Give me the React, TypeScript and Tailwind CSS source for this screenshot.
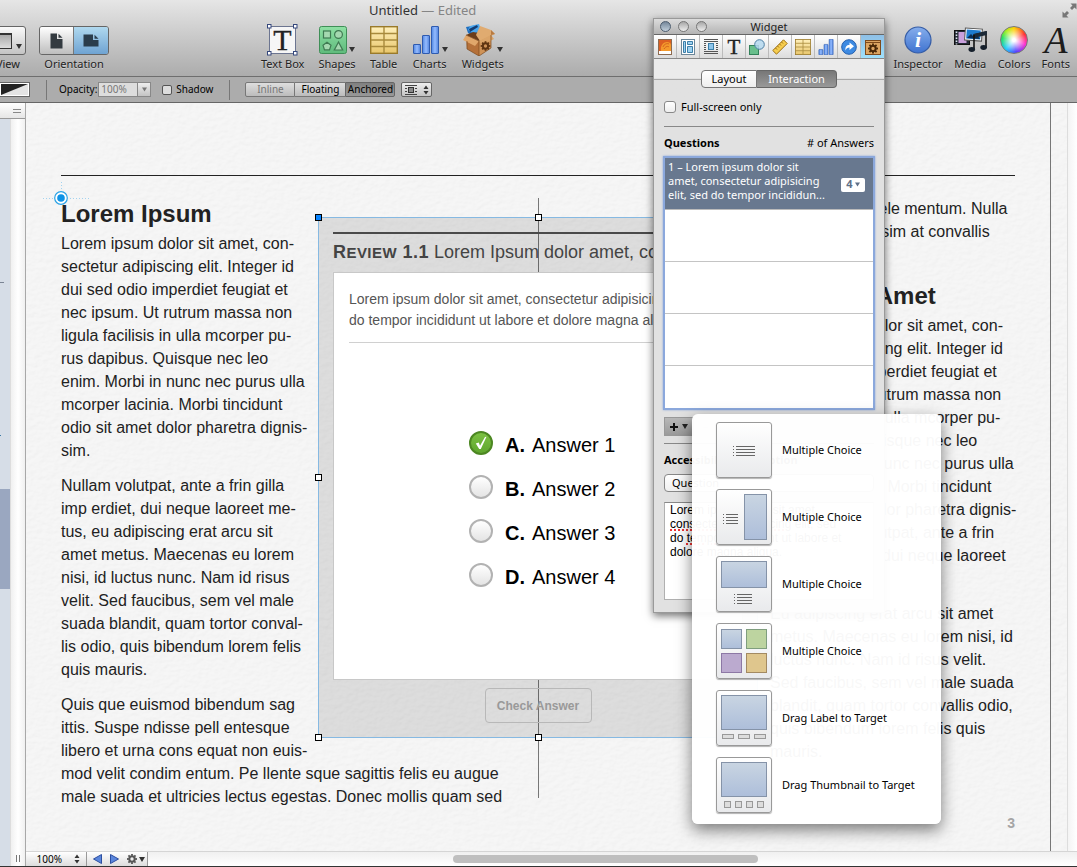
import React, { useState } from "react";
import clsx from "clsx";

const UI_FONT = "font-['Noto_Sans','Open_Sans',sans-serif]";
const PAGE_FONT = "font-['Liberation_Sans',Arial,sans-serif]";

const INTRO = [
  "Lorem ipsum dolor sit amet, con-",
  "sectetur adipiscing elit. Integer id",
  "dui sed odio imperdiet feugiat et",
  "nec ipsum. Ut rutrum massa non",
  "ligula facilisis in ulla mcorper pu-",
  "rus dapibus. Quisque nec leo",
  "enim. Morbi in nunc nec purus ulla",
  "mcorper lacinia. Morbi tincidunt",
  "odio sit amet dolor pharetra dignis-",
];

const LEFT_PARAGRAPHS = [
  [...INTRO, "sim."],
  [
    "Nullam volutpat, ante a frin gilla",
    "imp erdiet, dui neque laoreet me-",
    "tus, eu adipiscing erat arcu sit",
    "amet metus. Maecenas eu lorem",
    "nisi, id luctus nunc. Nam id risus",
    "velit. Sed faucibus, sem vel male",
    "suada blandit, quam tortor conval-",
    "lis odio, quis bibendum lorem felis",
    "quis mauris.",
  ],
  [
    "Quis que euismod bibendum sag",
    "ittis. Suspe ndisse pell entesque",
    "libero et urna cons equat non euis-",
    "mod velit condim entum. Pe llente sque sagittis felis eu augue",
    "male suada et ultricies lectus egestas. Donec mollis quam sed",
  ],
];

const RIGHT_TOP = [
  "Curabitur vitae ele mentum. Nulla",
  "Mauris id dignissim at convallis",
];

const RIGHT_PARAGRAPHS = [
  [
    ...INTRO,
    "sim. Nullam volutpat, ante a frin",
    "gilla imp erdiet, dui neque laoreet",
    "metus.",
  ],
  [
    "Eu adipiscing erat arcu sit amet",
    "metus. Maecenas eu lorem nisi, id",
    "luctus nunc. Nam id risus velit.",
    "Sed faucibus, sem vel male suada",
    "blandit, quam tortor convallis odio,",
    "quis bibendum lorem felis quis",
    "mauris.",
  ],
];

const Paragraph = ({ lines }: { lines: string[] }) => (
  <p className="mb-3 text-base leading-[23px] whitespace-nowrap">
    {lines.map((line) => (
      <span key={line} className="block">
        {line}
      </span>
    ))}
  </p>
);

const Caret = ({ className }: { className?: string }) => (
  <svg viewBox="0 0 6 5" className={clsx("w-1.5 h-[5px]", className)}>
    <path d="M0 0h6L3 5z" fill="currentColor" />
  </svg>
);

const Stepper = () => (
  <svg viewBox="0 0 6 10" className="w-1.5 h-2.5">
    <path d="M0.5 4L3 0.5 5.5 4zM0.5 6L3 9.5 5.5 6z" fill="#333" />
  </svg>
);

/* ---------- toolbar icons ---------- */

const TextBoxIcon = () => (
  <svg viewBox="0 0 31 32" className="w-[31px] h-8">
    <rect x="2.5" y="2.5" width="26" height="27" fill="#f6f6f6" stroke="#6c7590" />
    <text x="15.5" y="26" textAnchor="middle" fontSize="30" fontFamily="Liberation Serif, serif" fill="#222" stroke="#222" strokeWidth="0.3">
      T
    </text>
    {[[1, 1], [27, 1], [1, 28], [27, 28]].map(([x, y]) => (
      <rect key={`${x}-${y}`} x={x - 0.5} y={y - 0.5} width="3.5" height="3.5" fill="#fff" stroke="#34477c" />
    ))}
  </svg>
);

const ShapesIcon = () => (
  <svg viewBox="0 0 28 29" className="w-7 h-[29px]">
    <defs>
      <linearGradient id="shapesFill" x1="0" y1="0" x2="0" y2="1">
        <stop offset="0" stopColor="#8fe0a4" />
        <stop offset="1" stopColor="#5fbb7c" />
      </linearGradient>
    </defs>
    <rect x="0.5" y="0.5" width="27" height="27" rx="2" fill="url(#shapesFill)" stroke="#3f8f57" />
    <g fill="#a5d8b0" stroke="#3f7a52" strokeWidth="1.2">
      <rect x="4.5" y="5" width="7" height="7" />
      <circle cx="19.5" cy="8.5" r="3.9" />
      <path d="M8 16.2l4 3-1.5 4.7h-5L4 19.2z" />
      <path d="M19.5 16l4.2 8h-8.4z" />
    </g>
  </svg>
);

const TableIcon = ({ className }: { className: string }) => (
  <svg viewBox="0 0 28 28" className={className}>
    <defs>
      <linearGradient id="tableFill" x1="0" y1="0" x2="0" y2="1">
        <stop offset="0" stopColor="#fff0bb" />
        <stop offset="1" stopColor="#e8c66c" />
      </linearGradient>
    </defs>
    <rect x="0.7" y="0.7" width="26.6" height="26.6" fill="url(#tableFill)" stroke="#9a7a2a" strokeWidth="1.4" />
    <path d="M14 1v26M1 7.5h26M1 14h26M1 20.5h26" stroke="#a88a3c" strokeWidth="1.4" />
  </svg>
);

const BarsIcon = ({ className }: { className: string }) => (
  <svg viewBox="0 0 28 28" className={className}>
    <defs>
      <linearGradient id="barsFill" x1="0" y1="0" x2="1" y2="0">
        <stop offset="0" stopColor="#4f86e0" />
        <stop offset="0.5" stopColor="#94bbff" />
        <stop offset="1" stopColor="#4f82db" />
      </linearGradient>
    </defs>
    <g fill="url(#barsFill)" stroke="#2f5bb0">
      <rect x="1.5" y="18.5" width="7" height="9" rx="0.5" />
      <rect x="10.5" y="9.5" width="7" height="18" rx="0.5" />
      <rect x="19.5" y="0.5" width="7" height="27" rx="0.5" />
    </g>
  </svg>
);

const GEAR_TEETH = [0, 45, 90, 135, 180, 225, 270, 315];

const Gear = ({ cx, cy, r, color }: { cx: number; cy: number; r: number; color: string }) => (
  <g transform={`translate(${cx} ${cy})`}>
    <circle r={r * 0.55} fill="none" stroke={color} strokeWidth={r * 0.42} />
    {GEAR_TEETH.map((a) => (
      <rect key={a} x={-r * 0.18} y={-r} width={r * 0.36} height={r * 0.35} fill={color} transform={`rotate(${a})`} />
    ))}
  </g>
);

const WidgetsIcon = () => (
  <svg viewBox="0 0 32 32" className="w-8 h-8">
    <path d="M5 9L3 3l12-2 3 6-8 5z" fill="#1f6fc0" />
    <path d="M5 6l2-4 9-2 2 6-7 4z" fill="#49a6ee" />
    <path d="M6 5l8-4 1 2-8 5z" fill="#123c74" />
    <path d="M3 11l13 6v15L4 25z" fill="#b5713a" />
    <path d="M16 17l12-6v13l-12 8z" fill="#cf9358" />
    <path d="M3 11l7-3 18 3-12 6z" fill="#6b3d1a" />
    <path d="M3 11l13 6-4 5L0 16z" fill="#e0a76b" />
    <path d="M13 11l4-9 11 4 4 4-15 7z" fill="#e0ab70" />
    <path d="M28 6l4 4-4 1z" fill="#b87b42" />
    <path d="M16 17l12-6 3 4-12 6z" fill="#dba468" />
    <path d="M3 11l13 6v15M28 11v13l-12 8L4 25V17" fill="none" stroke="#7d4a20" strokeWidth="0.7" />
    <Gear cx={22.5} cy={22} r={4.8} color="#5f3512" />
  </svg>
);

const InspectorIcon = () => (
  <svg viewBox="0 0 30 30" className="w-[30px] h-[30px]">
    <defs>
      <linearGradient id="infoFill" x1="0" y1="0" x2="0" y2="1">
        <stop offset="0" stopColor="#86aeec" />
        <stop offset="1" stopColor="#3f73d0" />
      </linearGradient>
    </defs>
    <circle cx="15" cy="15" r="13" fill="url(#infoFill)" stroke="#355ca5" strokeWidth="1.2" />
    <text x="15" y="22" textAnchor="middle" fontSize="22" fontWeight="bold" fontStyle="italic" fontFamily="Liberation Serif, serif" fill="#fff">
      i
    </text>
  </svg>
);

const MediaIcon = () => (
  <svg viewBox="0 0 33 28" className="w-[33px] h-7">
    <rect x="0.5" y="4.5" width="15" height="14" fill="#222a36" stroke="#111" />
    <rect x="4.5" y="6" width="8" height="11" fill="#c9a0dc" />
    <path d="M2.5 5.5v13" stroke="#dfe5ee" strokeWidth="1.6" strokeDasharray="1.6 1.4" />
    <rect x="11" y="2.5" width="17" height="12" fill="#fff" stroke="#555" transform="rotate(4 19 8)" />
    <rect x="12.5" y="4" width="14" height="9" fill="#1d7cd0" transform="rotate(4 19 8)" />
    <path d="M13 12l4-4 3 3 3-2 3 4z" fill="#0c2e52" />
    <path d="M20 9l12-3v16" fill="none" stroke="#111" strokeWidth="1.6" />
    <path d="M19.200 8l13.600-3v4l-13.600 3z" fill="#1c2a38" />
    <path d="M20 9v14" stroke="#111" strokeWidth="1.6" />
    <ellipse cx="17.8" cy="23.5" rx="3.3" ry="2.4" fill="#16202c" />
    <ellipse cx="29.6" cy="21.5" rx="3.3" ry="2.4" fill="#16202c" />
  </svg>
);

const ColorsIcon = () => (
  <span className="h-7 w-7 rounded-full border border-[#777] bg-[radial-gradient(circle,white_8%,transparent_65%),conic-gradient(#ffd000,#ff3030_60deg,#ff30d0_110deg,#5040ff_170deg,#20c8ff_220deg,#20e060_280deg,#a8f020_320deg,#ffd000)]" />
);

const FontsIcon = () => (
  <span className="font-['Liberation_Serif',serif] text-[38px] leading-7 text-[#1c1c1c] italic">A</span>
);

const ToolItem = ({
  label,
  menu,
  children,
}: {
  label: string;
  menu?: boolean;
  children: React.ReactNode;
}) => (
  <button type="button" className="flex flex-col items-center">
    <span className={clsx("relative flex h-8 items-center", menu && "mr-2")}>
      {children}
      {menu && <Caret className="absolute -right-2 bottom-1 text-[#333]" />}
    </span>
    <span className="text-[11px] leading-4 text-[#222] [text-shadow:0_1px_0_rgba(255,255,255,0.4)]">
      {label}
    </span>
  </button>
);

const Toolbar = () => (
  <header className="flex h-[77px] flex-col border-b border-[#6e6e6e] bg-gradient-to-b from-[#e6e6e6] to-[#acacac]">
    <div className="flex h-5 items-center justify-between pl-[369px]">
      <h1 className="text-[13px] leading-5 text-[#333]">
        Untitled <span className="text-[#858585]">— Edited</span>
      </h1>
      <button type="button" aria-label="Full screen">
        <svg viewBox="0 0 15 15" className="h-[15px] w-[15px] text-[#777]">
          <path d="M14.5 0.5v6l-2-2-2.5 2.5-2-2L10.5 2.500l-2-2zM0.5 14.5v-6l2 2L5 8l2 2-2.5 2.5 2 2z" fill="currentColor" />
        </svg>
      </button>
    </div>
    <div className="flex items-start pt-1">
      <button type="button" className="flex w-[26px] shrink-0 flex-col items-end overflow-hidden">
        <span className="mt-0.5 mb-px flex h-[29px] w-12 items-center justify-end gap-1 rounded-[3px] border border-[#666] bg-gradient-to-b from-[#fafafa] to-[#c4c4c4] pr-[3px]">
          <span className="h-4 w-8 border border-t-2 border-[#333] bg-gradient-to-b from-[#aaa] to-[#ddd]" />
          <Caret className="mt-3 shrink-0 text-[#333]" />
        </span>
        <span className="mr-1.5 text-[11px] leading-4 text-[#222]">View</span>
      </button>
      <div className="ml-[13px] flex flex-col items-center">
        <div className="mt-0.5 mb-px flex h-[29px] overflow-hidden rounded-[3px] border border-[#666]">
          <button type="button" aria-label="Portrait" className="flex w-[34px] items-center justify-center border-r border-[#777] bg-gradient-to-b from-white to-[#bebebe]">
            <svg viewBox="0 0 13 16" className="h-4 w-[13px]">
              <path d="M0.5 0.5H7V6h5.5v9.5h-12z" fill="#333a40" />
              <path d="M8.5 0.8v4h4z" fill="#333a40" />
            </svg>
          </button>
          <button type="button" aria-label="Landscape" className="flex w-[34px] items-center justify-center bg-gradient-to-b from-[#b0d9ef] to-[#6fa3d2]">
            <svg viewBox="0 0 16 13" className="h-[13px] w-4">
              <path d="M0.5 0.5H10V6h5.5v6.5h-15z" fill="#2b3d4c" />
              <path d="M11.5 0.8v4h4z" fill="#2b3d4c" />
            </svg>
          </button>
        </div>
        <span className="text-[11px] leading-4 text-[#222] [text-shadow:0_1px_0_rgba(255,255,255,0.4)]">
          Orientation
        </span>
      </div>
      <div className="ml-[152px] flex gap-3.5">
        <ToolItem label="Text Box"><TextBoxIcon /></ToolItem>
        <ToolItem label="Shapes" menu><ShapesIcon /></ToolItem>
        <ToolItem label="Table"><TableIcon className="h-7 w-7" /></ToolItem>
        <ToolItem label="Charts" menu><BarsIcon className="h-7 w-7" /></ToolItem>
        <ToolItem label="Widgets" menu><WidgetsIcon /></ToolItem>
      </div>
      <div className="mr-[7px] ml-auto flex gap-[11px]">
        <ToolItem label="Inspector"><InspectorIcon /></ToolItem>
        <ToolItem label="Media"><MediaIcon /></ToolItem>
        <ToolItem label="Colors"><ColorsIcon /></ToolItem>
        <ToolItem label="Fonts"><FontsIcon /></ToolItem>
      </div>
    </div>
  </header>
);

const FormatBar = () => (
  <div className="flex h-[26px] items-center border-b border-[#666] bg-[#acacac] text-[10px] text-black">
    <button type="button" aria-label="Fill" className="h-[15px] w-[30px] border border-l-0 border-[#666] bg-white p-px">
      <svg viewBox="0 0 28 11" preserveAspectRatio="none" className="h-full w-full">
        <rect width="28" height="11" fill="#e4e4e4" />
        <path d="M0 0h28L0 11z" fill="#222" />
      </svg>
    </button>
    <span className="ml-4 h-5 w-px bg-[#777]" />
    <label htmlFor="opacity" className="ml-3">Opacity:</label>
    <input id="opacity" defaultValue="100%" className="ml-px h-[15px] w-10 border border-[#888] bg-[#ddd] px-0.5 text-[10px] text-[#777]" />
    <button type="button" aria-label="Opacity values" className="flex h-[15px] w-[13px] items-center justify-center border border-l-0 border-[#888] bg-gradient-to-b from-[#eee] to-[#c4c4c4] text-[#777]">
      <Caret className="h-1 w-[5px]" />
    </button>
    <label className="ml-[11px] flex items-center gap-1">
      <input type="checkbox" className="h-2.5 w-2.5 appearance-none rounded-[2px] border border-[#555] bg-[#ddd]" />
      Shadow
    </label>
    <span className="ml-4 h-5 w-px bg-[#777]" />
    <div className="ml-[15px] flex h-[15px] leading-[13px]">
      <button type="button" className="w-[50px] rounded-l-xs border border-[#777] bg-gradient-to-b from-[#dedede] to-[#bcbcbc] text-[#777]">Inline</button>
      <button type="button" className="w-[50px] border-y border-[#777] bg-gradient-to-b from-[#dedede] to-[#bcbcbc]">Floating</button>
      <button type="button" className="w-[50px] rounded-r-xs border border-[#666] bg-gradient-to-b from-[#808080] to-[#989898]">Anchored</button>
    </div>
    <button type="button" aria-label="Text wrap" className="ml-1.5 flex h-[15px] w-[31px] items-center justify-center gap-1.5 rounded-xs border border-[#666] bg-gradient-to-b from-[#eee] to-[#c4c4c4]">
      <svg viewBox="0 0 12 10" className="h-2.5 w-3">
        <path d="M0 0.5h12M0 9.5h12M0 3.5h2M0 6.5h2M10 3.5h2M10 6.5h2" stroke="#444" />
        <rect x="3.5" y="2.5" width="5" height="5" fill="#888" stroke="#333" />
      </svg>
      <Stepper />
    </button>
  </div>
);

/* ---------- page ---------- */

const PaperTexture = () => (
  <svg className="pointer-events-none absolute inset-0 h-full w-full" aria-hidden="true">
    <filter id="paper" x="0" y="0" width="100%" height="100%" colorInterpolationFilters="sRGB">
      <feTurbulence type="fractalNoise" baseFrequency="0.16 0.24" numOctaves="3" seed="4" />
      <feDiffuseLighting surfaceScale="0.5" diffuseConstant="1.11" lightingColor="#ffffff">
        <feDistantLight azimuth="235" elevation="60" />
      </feDiffuseLighting>
    </filter>
    <rect width="100%" height="100%" fill="#f5f5f5" />
    <rect width="100%" height="100%" filter="url(#paper)" opacity="0.13" />
  </svg>
);

const Handle = ({ className, active }: { className: string; active?: boolean }) => (
  <span
    className={clsx(
      "absolute h-[7px] w-[7px] border border-black",
      active ? "bg-[#0a84ff]" : "bg-white",
      className,
    )}
  />
);

const ANSWERS = ["Answer 1", "Answer 2", "Answer 3", "Answer 4"];

const ReviewWidget = () => {
  const [picked, setPicked] = useState(0);

  return (
    <section className="absolute top-[114px] left-[292px] h-[521px] w-[440px] border border-[#86b9e2] bg-black/10 px-3.5 pt-3.5 text-[#444]">
      <h3 className="border-t-2 border-[#4a4a4a] pt-[7px] text-lg leading-[23px] whitespace-nowrap">
        <b className="tracking-wide">
          R<span className="text-[15px]">EVIEW</span> 1.1
        </b>{" "}
        Lorem Ipsum dolor amet, consectetur
      </h3>
      <div className="mt-2 h-[408px] border border-[#c8c8c8] bg-white px-[15px] pt-4">
        <p className="border-b border-[#d0d0d0] pb-[11px] text-sm leading-[21px] whitespace-nowrap text-[#555]">
          Lorem ipsum dolor sit amet, consectetur adipisicing elit,
          <br />
          do tempor incididunt ut labore et dolore magna aliqua.
        </p>
        <ul className="mt-[78px] ml-[120px] flex flex-col text-xl text-black">
          {ANSWERS.map((answer, i) => (
            <li key={answer} className="h-11">
              <label className="flex h-11 items-center">
                <span className="relative flex h-6 w-6 items-center justify-center">
                  <input
                    type="radio"
                    name="answer"
                    checked={picked === i}
                    onChange={() => setPicked(i)}
                    className={clsx(
                      "h-6 w-6 appearance-none rounded-full border-2",
                      picked === i
                        ? "border-[#4c8722] bg-gradient-to-b from-[#7cc142] to-[#5fa62e]"
                        : "border-[#b2b2b2] bg-gradient-to-b from-white to-[#e4e4e4]",
                    )}
                  />
                  {picked === i && (
                    <svg viewBox="0 0 12 14" className="pointer-events-none absolute h-3.5 w-3">
                      <path d="M0.8 7.5l3-1 1.2 3.2L10 1l1.5-0.3L5.8 13H4.2z" fill="#fff" />
                    </svg>
                  )}
                </span>
                <b className="mt-1 ml-3 w-[27px]">{"ABCD"[i]}.</b>
                <span className="mt-1">{answer}</span>
              </label>
            </li>
          ))}
        </ul>
      </div>
      <div className="flex justify-center pt-2">
        <button type="button" className="h-[35px] w-[107px] rounded border border-[#b8b8b8] text-xs font-bold text-[#999]">
          Check Answer
        </button>
      </div>
      <Handle className="-top-1 -left-1" active />
      <Handle className="-top-1 left-[216px]" />
      <Handle className="top-[256px] -left-1" />
      <Handle className="-bottom-1 -left-1" />
      <Handle className="-bottom-1 left-[216px]" />
    </section>
  );
};

const AnchorMark = () => (
  <svg viewBox="0 0 50 32" className="absolute top-[78px] left-4 h-8 w-[50px]">
    <path d="M1 17.5h10M28 17.5h20M19.5 1v9" stroke="#a3d3f0" strokeDasharray="1 2" />
    <circle cx="19" cy="17" r="6.3" fill="#fff" stroke="#2ba3e6" strokeWidth="1.2" />
    <circle cx="19" cy="17" r="3.8" fill="#0f93e6" />
  </svg>
);

const Page = () => (
  <main className={clsx("relative flex-1 overflow-hidden text-[#222]", PAGE_FONT)}>
    <PaperTexture />
    <div className="relative mr-4 h-full border-r border-[#777] pr-[35px] pl-[35px]">
      <hr className="border-transparent pt-[71px]" />
      <hr className="border-t border-[#222]" />
      <div className="flex justify-between pt-[21px]">
        <article className="w-[246px] pt-0.5">
          <h2 className="mb-[3px] text-2xl leading-[30px] font-bold">Lorem Ipsum</h2>
          {LEFT_PARAGRAPHS.map((lines) => (
            <Paragraph key={lines[0]} lines={lines} />
          ))}
        </article>
        <article className="w-[245px]">
          <Paragraph lines={RIGHT_TOP} />
          <h2 className="mt-[38px] mb-[3px] text-2xl leading-[30px] font-bold">Dolor Sit Amet</h2>
          {RIGHT_PARAGRAPHS.map((lines) => (
            <Paragraph key={lines[0]} lines={lines} />
          ))}
        </article>
      </div>
      <span className="absolute right-[35px] bottom-[18px] text-sm font-bold text-[#a5a5a5]">3</span>
      <AnchorMark />
      <span className="absolute top-[95px] left-[512px] h-[600px] w-px bg-[#777]" />
      <ReviewWidget />
    </div>
  </main>
);

const Rail = () => (
  <aside className="flex w-[26px] shrink-0 flex-col border-r border-[#a8a8a8]">
    <div className="flex h-4 items-center justify-end border-b border-[#999] bg-gradient-to-b from-white to-[#e6e6e6] pr-1">
      <span className="h-1 w-2 border-y border-[#888]" />
    </div>
    <div className="flex flex-1">
      <div className="flex w-2.5 flex-col bg-[#d6dde7]">
        <span className="mt-[163px] h-px w-1 bg-[#7a8494]" />
        <span className="mt-[152px] h-px w-px bg-[#3b7aa5]" />
        <span className="mt-[53px] h-[100px] bg-[#9aa7c0]" />
      </div>
      <div className="flex flex-1 items-end justify-center border-l border-[#ddd] bg-gradient-to-r from-[#f0f0f0] via-white to-[#f0f0f0] pb-1">
        <span className="h-[7px] w-1 border-x border-[#777]" />
      </div>
    </div>
  </aside>
);

const StatusBar = () => (
  <footer className="flex h-[15px] border-t border-[#d5d5d5] bg-gradient-to-b from-[#f0f0f0] to-white text-[10px] leading-[14px] text-black">
    <button type="button" className="flex w-[61px] items-center justify-end gap-3 border-r border-[#999] bg-gradient-to-b from-white to-[#ddd] pr-1.5">
      100%
      <Stepper />
    </button>
    <div className="flex w-[61px] items-center gap-2 border-r border-[#999] bg-gradient-to-b from-white to-[#ddd] pl-1.5">
      <button type="button" aria-label="Previous page">
        <svg viewBox="0 0 9 10" className="h-2.5 w-[9px]"><path d="M8.5 0.5v9L0.5 5z" fill="#5a86dc" stroke="#2d4fa0" /></svg>
      </button>
      <button type="button" aria-label="Next page">
        <svg viewBox="0 0 9 10" className="h-2.5 w-[9px]"><path d="M0.5 0.5v9L8.5 5z" fill="#5a86dc" stroke="#2d4fa0" /></svg>
      </button>
      <button type="button" aria-label="Actions" className="flex items-center gap-0.5">
        <svg viewBox="0 0 10 10" className="h-2.5 w-2.5"><Gear cx={5} cy={5} r={5} color="#555" /></svg>
        <Caret className="h-[3px] w-1 text-[#333]" />
      </button>
    </div>
    <div className="flex flex-1 items-center pl-[29%]">
      <span className="h-2 w-[305px] rounded-full bg-[#bfbfbf]" />
    </div>
  </footer>
);

/* ---------- inspector ---------- */

const PANES: { name: string; icon: React.ReactNode }[] = [
  {
    name: "Document",
    icon: (
      <svg viewBox="0 0 16 16" className="h-4 w-4">
        <rect x="1.5" y="0.5" width="13" height="15" fill="#fff" stroke="#8c6a50" />
        <rect x="2" y="1" width="12" height="11" fill="#dc5f22" />
        <path d="M4 12c-1-5 2-9 6-9 2 0 4 1 4 3v6z" fill="#f59a2c" />
        <path d="M6 8c1-3 4-4 6-3M7 10c2-3 4-3 5-2" stroke="#c9561a" strokeWidth="0.8" fill="none" />
      </svg>
    ),
  },
  {
    name: "Layout",
    icon: (
      <svg viewBox="0 0 16 16" className="h-4 w-4">
        <rect x="1.5" y="0.5" width="13" height="15" fill="#fff" stroke="#6d8799" />
        <path d="M3.5 2.5h2v11h-2zM7.5 2.5h5v3h-5zM7.5 7.5h5v6h-5z" fill="#9cd0ef" stroke="#3c7ea8" />
      </svg>
    ),
  },
  {
    name: "Wrap",
    icon: (
      <svg viewBox="0 0 16 16" className="h-4 w-4">
        <path d="M1 0.5h14M1 2.5h14M1 4.5h2M1 6.5h2M1 8.5h2M1 10.5h2M13 4.5h2M13 6.5h2M13 8.5h2M13 10.5h2M1 12.5h14M1 14.5h14" stroke="#555" />
        <rect x="5.5" y="4.5" width="5" height="6" fill="#8cc4ea" stroke="#3c7ea8" />
      </svg>
    ),
  },
  {
    name: "Text",
    icon: (
      <svg viewBox="0 0 16 16" className="h-4 w-4 overflow-visible">
        <text x="8" y="15" textAnchor="middle" fontSize="21" fontFamily="Liberation Serif, serif" fill="#222" stroke="#222" strokeWidth="0.4">T</text>
      </svg>
    ),
  },
  {
    name: "Graphic",
    icon: (
      <svg viewBox="0 0 16 16" className="h-4 w-4">
        <rect x="0.5" y="6.5" width="9" height="9" fill="#69bf8c" stroke="#34825a" />
        <circle cx="10.5" cy="5.5" r="4.8" fill="#b5d8ee" fillOpacity="0.85" stroke="#4e7fa3" />
      </svg>
    ),
  },
  {
    name: "Metrics",
    icon: (
      <svg viewBox="0 0 16 16" className="h-4 w-4">
        <path d="M0.8 11.5L11.5 0.8l3.700 3.700L4.500 15.200z" fill="#f6cd4e" stroke="#9c6f14" />
        <path d="M3.500 9l1.500 1.500M5.500 7l1.500 1.500M7.500 5l1.500 1.500M9.500 3l1.500 1.500" stroke="#9c6f14" />
      </svg>
    ),
  },
  { name: "Table", icon: <TableIcon className="h-4 w-4" /> },
  { name: "Chart", icon: <BarsIcon className="h-4 w-4" /> },
  {
    name: "Hyperlink",
    icon: (
      <svg viewBox="0 0 16 16" className="h-4 w-4">
        <circle cx="8" cy="8" r="7.3" fill="#3d8ae2" stroke="#2560ae" />
        <path d="M4.5 11.5C4 8 5.5 6 8.5 6V3.5L13 7.3 8.5 11V8.5C6.5 8.5 5.2 9.5 4.5 11.5z" fill="#fff" />
      </svg>
    ),
  },
  {
    name: "Widget",
    icon: (
      <svg viewBox="0 0 16 16" className="h-4 w-4">
        <rect x="0.5" y="1.5" width="15" height="14" fill="#dca562" stroke="#7d4a1c" />
        <path d="M0.5 3.5h15" stroke="#7d4a1c" />
        <Gear cx={8} cy={9.5} r={5} color="#4a2908" />
      </svg>
    ),
  },
];

const Inspector = () => (
  <section className="absolute top-[18px] left-[653px] h-[595px] w-[232px] border border-[#999] bg-[#e1e1e1] text-[11px] text-black shadow-[0_3px_8px_rgba(0,0,0,0.55)]">
    <div className="relative flex h-4 items-center justify-center border-b border-[#666] bg-gradient-to-b from-[#dcdcdc] to-[#b4b4b4]">
      <div className="absolute left-1.5 flex gap-[7px]">
        <button type="button" aria-label="Close" className="h-[11px] w-[11px] rounded-full border border-[#4e5e70] bg-gradient-to-b from-[#75879a] to-[#c2d0dc]" />
        <button type="button" aria-label="Minimize" className="h-[11px] w-[11px] rounded-full border border-[#777] bg-gradient-to-b from-[#a8a8a8] to-[#eee]" />
        <button type="button" aria-label="Zoom" className="h-[11px] w-[11px] rounded-full border border-[#777] bg-gradient-to-b from-[#a8a8a8] to-[#eee]" />
      </div>
      <h2 className="leading-4 text-[#222]">Widget</h2>
    </div>
    <nav className="grid h-6 grid-cols-10 border-b border-[#888]">
      {PANES.map((pane) => (
        <button
          key={pane.name}
          type="button"
          aria-label={pane.name}
          className={clsx(
            "flex items-center justify-center border-r border-[#bbb] last:border-r-0",
            pane.name === "Widget"
              ? "bg-gradient-to-b from-[#8ebfe6] to-[#9fe0fb]"
              : "bg-gradient-to-b from-white to-[#dcdcdc]",
          )}
        >
          {pane.icon}
        </button>
      ))}
    </nav>
    <div className="flex items-center bg-gradient-to-b from-[#ebebeb] from-50% to-[#e1e1e1] to-50% pt-[11px] pb-2.5">
      <span className="h-px flex-1 bg-[#aaa]" />
      <button type="button" className="h-[18px] w-14 rounded-l border border-[#777] bg-gradient-to-b from-white to-[#eee] leading-4">
        Layout
      </button>
      <button type="button" className="h-[18px] w-20 rounded-r border border-l-0 border-[#666] bg-gradient-to-b from-[#777] to-[#999] leading-4 text-white">
        Interaction
      </button>
      <span className="h-px flex-1 bg-[#aaa]" />
    </div>
    <div className="px-2.5">
      <label className="flex h-[18px] items-center gap-[5px]">
        <input type="checkbox" className="h-3 w-3 appearance-none rounded-[3px] border border-[#888] bg-gradient-to-b from-white to-[#eee]" />
        Full-screen only
      </label>
      <hr className="mt-[10px] border-[#888]" />
      <div className="flex h-[29px] items-center justify-between pt-1">
        <h3 className="font-bold">Questions</h3>
        <span># of Answers</span>
      </div>
      <ul className="-mx-px h-[254px] border-2 border-[#8ba8dc] bg-white shadow-[0_0_2px_#8ba8dc]">
        <li className="flex h-[52px] justify-between border-b border-[#bbb] bg-[#68788f] pt-0.5 pr-2 pl-[3px] text-white">
          <p className="leading-[14px] whitespace-nowrap">
            1 – Lorem ipsum dolor sit
            <br />
            amet, consectetur adipisicing
            <br />
            elit, sed do tempor incididun...
          </p>
          <button type="button" className="flex h-3.5 w-6 shrink-0 items-center justify-center gap-0.5 self-center rounded-xs bg-white font-bold text-[#5f6f88]">
            4 <Caret className="h-1 w-[5px]" />
          </button>
        </li>
        {[2, 3, 4].map((row) => (
          <li key={row} className="h-[52px] border-b border-[#c4c4c4]" />
        ))}
      </ul>
      <div className="mt-[7px] flex h-[19px]">
        <button type="button" aria-label="Add question" className="flex w-[30px] items-center justify-center gap-1 border border-[#999] bg-gradient-to-b from-[#b8b8b8] to-[#9a9a9a]">
          <svg viewBox="0 0 8 8" className="h-2 w-2"><path d="M4 0v8M0 4h8" stroke="#111" strokeWidth="2" /></svg>
          <Caret className="text-[#222]" />
        </button>
        <button type="button" aria-label="Remove question" className="w-6 border border-l-0 border-[#ddd] text-[#aaa]">
          –
        </button>
      </div>
      <hr className="mt-[7px] border-[#888]" />
      <h3 className="mt-[7px] leading-[18px] font-bold">Accessibility Description</h3>
      <label className="mt-[5px] block">
        <span className="sr-only">Description for</span>
        <select className="h-[18px] w-full appearance-none rounded border border-[#888] bg-gradient-to-b from-white to-[#f0f0f0] pl-[7px] text-[11px] leading-4">
          <option>Question</option>
        </select>
      </label>
      <div
        role="textbox"
        aria-label="Accessibility description"
        contentEditable
        suppressContentEditableWarning
        className={clsx("mt-2.5 h-[98px] border border-[#b0b0b0] border-t-[#888] bg-white px-[5px] text-xs leading-[14px]", PAGE_FONT)}
      >
        Lorem ipsum dolor sit amet,
        <br />
        <span className="underline decoration-[#e33] decoration-dotted decoration-2">consectetur adipisicing</span> elit, sed
        <br />
        do <span className="underline decoration-[#e33] decoration-dotted decoration-2">tempor</span> incididunt ut labore et
        <br />
        dolore magna aliqua.
      </div>
    </div>
  </section>
);

/* ---------- question type menu ---------- */

const BLUE = { fill: "url(#thumbBlue)", stroke: "#8593a8" };

const Lines = ({ x, y, w }: { x: number; y: number; w: number }) => (
  <g stroke="#666">
    {[0, 3, 6, 9].map((dy) => (
      <path key={dy} d={`M${x} ${y + dy + 0.5}h1M${x + 3} ${y + dy + 0.5}h${w - 3}`} />
    ))}
  </g>
);

const QUESTION_TYPES: { id: string; label: string; art: React.ReactNode }[] = [
  { id: "text", label: "Multiple Choice", art: <Lines x={16} y={23} w={22} /> },
  {
    id: "side",
    label: "Multiple Choice",
    art: (
      <>
        <Lines x={6} y={24} w={15} />
        <rect x="27.5" y="4.5" width="22" height="45" {...BLUE} />
      </>
    ),
  },
  {
    id: "top",
    label: "Multiple Choice",
    art: (
      <>
        <rect x="4.5" y="4.5" width="45" height="26" {...BLUE} />
        <Lines x={17} y={37} w={18} />
      </>
    ),
  },
  {
    id: "grid",
    label: "Multiple Choice",
    art: (
      <>
        <rect x="4.5" y="5.5" width="20" height="19" {...BLUE} />
        <rect x="29.5" y="5.5" width="20" height="19" fill="#bdd4a0" stroke="#7f9e7e" />
        <rect x="4.5" y="29.5" width="20" height="19" fill="#bbaacf" stroke="#8d78a5" />
        <rect x="29.5" y="29.5" width="20" height="19" fill="#dfc68d" stroke="#a38a62" />
      </>
    ),
  },
  {
    id: "label",
    label: "Drag Label to Target",
    art: (
      <>
        <rect x="4.5" y="4.5" width="45" height="34" {...BLUE} />
        {[5.5, 21.5, 37.5].map((x) => (
          <rect key={x} x={x} y="43.5" width="11" height="4" fill="#ddd" stroke="#999" />
        ))}
      </>
    ),
  },
  {
    id: "thumb",
    label: "Drag Thumbnail to Target",
    art: (
      <>
        <rect x="4.5" y="4.5" width="45" height="34" {...BLUE} />
        {[7.5, 18.5, 29.5, 40.5].map((x) => (
          <rect key={x} x={x} y="43.5" width="6" height="6" fill="#ddd" stroke="#999" />
        ))}
      </>
    ),
  },
];

const QuestionTypeMenu = () => (
  <ul className="absolute top-[414px] left-[692px] flex w-[249px] flex-col gap-[11px] rounded-md bg-white/97 pt-2 pb-[11px] pl-6 text-[11px] text-black shadow-[0_6px_16px_rgba(0,0,0,0.5)]">
    {QUESTION_TYPES.map((type) => (
      <li key={type.id}>
        <button type="button" className="flex items-center gap-2.5">
          <span className="flex h-14 w-14 rounded-[3px] border border-[#999] bg-gradient-to-b from-white to-[#e9eaec] shadow-[0_1px_1px_rgba(0,0,0,0.3)]">
            <svg viewBox="0 0 54 54" className="h-[54px] w-[54px]">
              <defs>
                <linearGradient id="thumbBlue" x1="0" y1="0" x2="0" y2="1">
                  <stop offset="0" stopColor="#c9d5e2" />
                  <stop offset="1" stopColor="#adbeda" />
                </linearGradient>
              </defs>
              {type.art}
            </svg>
          </span>
          {type.label}
        </button>
      </li>
    ))}
  </ul>
);

export default function App() {
  return (
    <div className={clsx("relative flex min-h-screen flex-col overflow-hidden border-b border-[#333] bg-white", UI_FONT)}>
      <Toolbar />
      <FormatBar />
      <div className="flex flex-1">
        <Rail />
        <div className="flex flex-1 flex-col">
          <div className="flex flex-1">
            <Page />
            <div className="w-2.5 border-l border-[#ddd] bg-gradient-to-r from-[#f4f4f4] to-white" />
          </div>
          <StatusBar />
        </div>
      </div>
      <Inspector />
      <QuestionTypeMenu />
    </div>
  );
}
